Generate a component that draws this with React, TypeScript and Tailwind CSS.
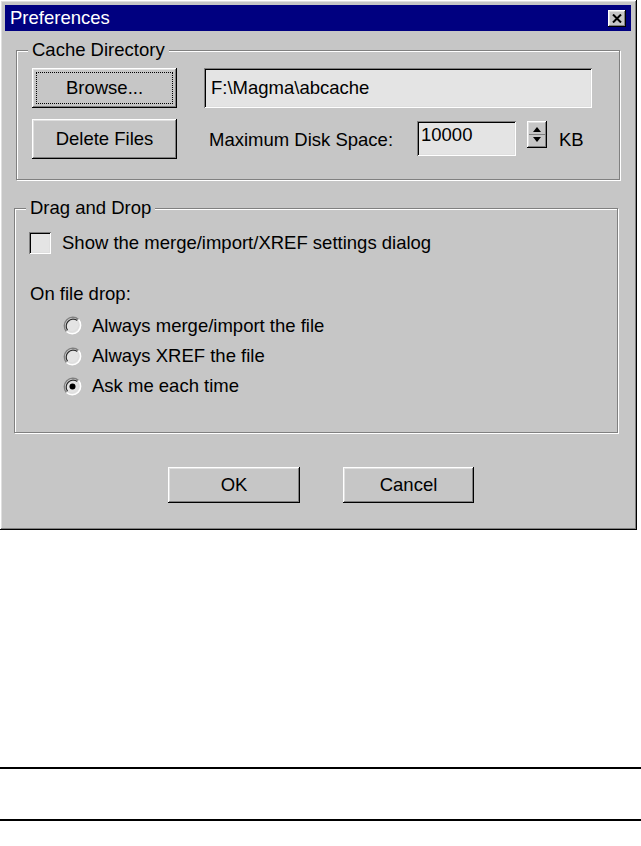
import React from 'react';

// win9x bevels
const raised =
  'shadow-[inset_-1px_-1px_#000,inset_1px_1px_#fff,inset_-2px_-2px_#808080,inset_2px_2px_#dfdfdf]';
const sunken =
  'shadow-[inset_1px_1px_#808080,inset_-1px_-1px_#fff,inset_2px_2px_#000,inset_-2px_-2px_#dfdfdf]';
const etched = 'border border-[#808080] shadow-[1px_1px_#fff,inset_1px_1px_#fff]';

function Btn({ children, focused, className }: { children: React.ReactNode; focused?: boolean; className: string }) {
  return (
    <div className={`relative flex items-center justify-center bg-[#c6c6c6] ${raised} ${className}`}>
      {focused && <span className="absolute inset-[4px] border border-dotted border-black" />}
      <span>{children}</span>
    </div>
  );
}

function Group({ label, className, children }: { label: string; className: string; children: React.ReactNode }) {
  return (
    <div className={`relative ${etched} ${className}`}>
      <span className="absolute -top-[11px] left-[11px] bg-[#c6c6c6] px-[4px] leading-[20px]">{label}</span>
      {children}
    </div>
  );
}

function Radio({ checked }: { checked?: boolean }) {
  return (
    <svg width="19" height="19" viewBox="0 0 19 19">
      <circle cx="9.5" cy="9.5" r="8.5" fill="#e4e4e4" />
      <path d="M3.5 15.5 A8.5 8.5 0 0 1 15.5 3.5" stroke="#808080" strokeWidth="1.5" fill="none" />
      <path d="M4.6 14.4 A7 7 0 0 1 14.4 4.6" stroke="#2a2a2a" strokeWidth="1.2" fill="none" />
      <path d="M3.5 15.5 A8.5 8.5 0 0 0 15.5 3.5" stroke="#ffffff" strokeWidth="1.5" fill="none" />
      <path d="M4.6 14.4 A7 7 0 0 0 14.4 4.6" stroke="#dfdfdf" strokeWidth="1.2" fill="none" />
      {checked && <circle cx="9.5" cy="9.5" r="3" fill="#000" />}
    </svg>
  );
}

export default function App() {
  return (
    <div className="w-[641px] h-[846px] bg-white font-['Liberation_Sans',Arial,sans-serif] text-[18.5px] text-black">
      {/* dialog */}
      <div className={`w-[637px] h-[530px] bg-[#c6c6c6] pl-[5px] pr-[6px] pt-[5px] ${raised}`}>
        <div className="h-[26px] bg-[#000080] flex items-center justify-between pl-[5px] pr-[5px]">
          <span className="text-white leading-none">Preferences</span>
          <div className={`w-[18px] h-[17px] bg-[#c6c6c6] flex items-center justify-center ${raised}`}>
            <svg width="10" height="9" viewBox="0 0 10 9">
              <path d="M1 0.5 L9 8.5 M9 0.5 L1 8.5" stroke="#000" strokeWidth="2" />
            </svg>
          </div>
        </div>

        <Group label="Cache Directory" className="mt-[19px] ml-[11px] w-[604px] h-[130px] pt-[17px] pl-[15px]">
          <div className="flex items-center">
            <Btn focused className="w-[145px] h-[40px]">Browse...</Btn>
            <div className={`ml-[27px] w-[388px] h-[40px] bg-[#e4e4e4] flex items-center pl-[7px] ${sunken}`}>
              F:\Magma\abcache
            </div>
          </div>
          <div className="mt-[11px] flex items-start h-[40px]">
            <Btn className="w-[145px] h-[40px]">Delete Files</Btn>
            <span className="ml-[32px] w-[208px] self-center pt-[2px]">Maximum Disk Space:</span>
            <div className={`mt-[2px] w-[99px] h-[35px] bg-[#e4e4e4] pl-[4px] pt-[5px] leading-none ${sunken}`}>10000</div>
            <div className={`mt-[2px] ml-[11px] w-[20px] h-[27px] bg-[#c6c6c6] flex flex-col ${raised}`}>
              <div className="flex-1 flex items-end justify-center pb-[2px]">
                <svg width="8" height="5" viewBox="0 0 8 5"><path d="M4 0 L8 5 L0 5 Z" fill="#000" /></svg>
              </div>
              <div className="h-px mx-[2px] bg-[#808080]" />
              <div className="flex-1 flex items-start justify-center pt-[2px]">
                <svg width="8" height="5" viewBox="0 0 8 5"><path d="M0 0 L8 0 L4 5 Z" fill="#000" /></svg>
              </div>
            </div>
            <span className="ml-[12px] self-center pt-[1px]">KB</span>
          </div>
        </Group>

        <Group label="Drag and Drop" className="mt-[28px] ml-[9px] w-[604px] h-[225px] pt-[23px] pl-[14px]">
          <div className="flex items-center h-[22px]">
            <div className={`w-[22px] h-[22px] bg-[#e4e4e4] ${sunken}`} />
            <span className="ml-[11px]">Show the merge/import/XREF settings dialog</span>
          </div>
          <div className="mt-[30px] ml-[1px] leading-[20px]">On file drop:</div>
          <div className="mt-[6px] ml-[34px] flex flex-col">
            <div className="h-[31px] flex items-center">
              <Radio />
              <span className="ml-[10px]">Always merge/import the file</span>
            </div>
            <div className="h-[30px] flex items-center">
              <Radio />
              <span className="ml-[10px]">Always XREF the file</span>
            </div>
            <div className="h-[30px] flex items-center">
              <Radio checked />
              <span className="ml-[10px]">Ask me each time</span>
            </div>
          </div>
        </Group>

        <div className="mt-[34px] ml-[163px] flex gap-[43px]">
          <Btn className="w-[132px] h-[36px]">OK</Btn>
          <Btn className="w-[131px] h-[36px]">Cancel</Btn>
        </div>
      </div>

      <div className="mt-[237px] h-[2px] bg-black" />
      <div className="mt-[50px] h-[2px] bg-black" />
    </div>
  );
}
